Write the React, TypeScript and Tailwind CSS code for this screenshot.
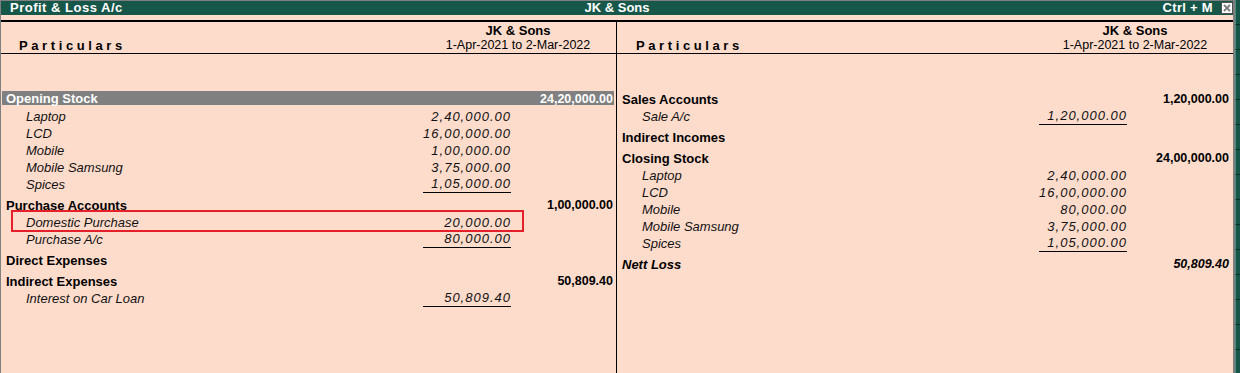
import React from "react";

type Item = { label: string; sub: string; underline?: boolean; boxed?: boolean };
type Group = { head: string; amount?: string; highlight?: boolean; nett?: boolean; items: Item[] };

const leftGroups: Group[] = [
  {
    head: "Opening Stock",
    amount: "24,20,000.00",
    highlight: true,
    items: [
      { label: "Laptop", sub: "2,40,000.00" },
      { label: "LCD", sub: "16,00,000.00" },
      { label: "Mobile", sub: "1,00,000.00" },
      { label: "Mobile Samsung", sub: "3,75,000.00" },
      { label: "Spices", sub: "1,05,000.00", underline: true },
    ],
  },
  {
    head: "Purchase Accounts",
    amount: "1,00,000.00",
    items: [
      { label: "Domestic Purchase", sub: "20,000.00", boxed: true },
      { label: "Purchase A/c", sub: "80,000.00", underline: true },
    ],
  },
  { head: "Direct Expenses", items: [] },
  {
    head: "Indirect Expenses",
    amount: "50,809.40",
    items: [{ label: "Interest on Car Loan", sub: "50,809.40", underline: true }],
  },
];

const rightGroups: Group[] = [
  {
    head: "Sales Accounts",
    amount: "1,20,000.00",
    items: [{ label: "Sale A/c", sub: "1,20,000.00", underline: true }],
  },
  { head: "Indirect Incomes", items: [] },
  {
    head: "Closing Stock",
    amount: "24,00,000.00",
    items: [
      { label: "Laptop", sub: "2,40,000.00" },
      { label: "LCD", sub: "16,00,000.00" },
      { label: "Mobile", sub: "80,000.00" },
      { label: "Mobile Samsung", sub: "3,75,000.00" },
      { label: "Spices", sub: "1,05,000.00", underline: true },
    ],
  },
  { head: "Nett Loss", amount: "50,809.40", nett: true, items: [] },
];

function HeadRow({ g, right }: { g: Group; right: boolean }) {
  if (g.highlight) {
    return (
      <div className="ml-[1px] mr-[2px] mb-[3px] flex h-[14px] items-start bg-[#808080] pl-[4px] pr-[1px] text-white">
        <div className="flex-1 text-[13px] font-bold leading-[16px]">{g.head}</div>
        <div className="w-[100px] text-right text-[12.5px] font-bold leading-[16px]">{g.amount}</div>
      </div>
    );
  }
  return (
    <div className={`flex h-[17px] items-center pl-[5px] text-black ${right ? "pr-[4px]" : "pr-[3px]"} ${g.nett ? "italic" : ""}`}>
      <div className="flex-1 text-[13px] font-bold leading-[17px]">{g.head}</div>
      <div className="w-[100px] text-right text-[12.5px] font-bold leading-[17px]">{g.amount ?? ""}</div>
    </div>
  );
}

function SubRow({ it, right }: { it: Item; right: boolean }) {
  return (
    <div className={`flex h-[17px] items-center pl-[5px] text-[#111] ${right ? "pr-[4px]" : "pr-[3px]"}`}>
      <div className="ml-[20px] flex-1 text-[13px] italic leading-[17px]">{it.label}</div>
      <div className="flex w-[100px] justify-end">
        <div
          className={`h-[17px] w-[88px] text-right text-[13px] italic tracking-[1px] ${
            it.underline ? "border-b border-black leading-[16px]" : "leading-[17px]"
          }`}
        >
          {it.sub}
        </div>
      </div>
      <div className="w-[2px]" />
      <div className="w-[100px]" />
    </div>
  );
}

function Panel({ groups, right }: { groups: Group[]; right: boolean }) {
  return (
    <div className={`relative flex flex-col ${right ? "w-[616px]" : "w-[615px]"}`}>
      <div className="flex h-[32px] border-b border-black">
        <div className={`flex-1 pt-[16px] text-[13px] font-bold leading-[15px] tracking-[3.6px] text-black ${right ? "pl-[19px]" : "pl-[18px]"}`}>
          Particulars
        </div>
        <div className={`flex w-[190px] flex-col items-center pt-[1px] text-black ${right ? "mr-[3px]" : "mr-[3px]"}`}>
          <div className="text-[13px] font-bold leading-[15px]">JK &amp; Sons</div>
          <div className="text-[12.5px] leading-[15px]">1-Apr-2021 to 2-Mar-2022</div>
        </div>
      </div>
      <div className="flex flex-col pt-[37px]">
        {groups.map((g, i) => (
          <div key={g.head} className={i === 0 ? "" : "mt-[4px]"}>
            <HeadRow g={g} right={right} />
            {g.items.map((it) => (
              <SubRow key={it.label} it={it} right={right} />
            ))}
          </div>
        ))}
      </div>
      {!right && (
        <div className="pointer-events-none absolute left-[10px] top-[188px] h-[22px] w-[513px] border-2 border-[#e5202a]" />
      )}
    </div>
  );
}

export default function App() {
  const segs = Array.from({ length: 16 });
  return (
    <div className="flex h-[373px] w-[1240px] overflow-hidden bg-[#fedccc] font-['Liberation_Sans',Arial,sans-serif]">
      <div className="flex w-[1233px] flex-col border-l border-[#808080]">
        <div className="grid h-[15px] grid-cols-[1fr_auto_1fr] items-center border-t border-[#808080] bg-[#17574a] text-[13px] font-bold leading-[14px] text-white">
          <div className="pl-[9px] tracking-[0.5px]">Profit &amp; Loss A/c</div>
          <div>JK &amp; Sons</div>
          <div className="flex items-center justify-end">
            <span className="tracking-[0.3px]">Ctrl + M</span>
            <div className="ml-[8px] flex h-[12px] w-[12px] items-center justify-center border border-[#505050] bg-white">
              <svg width="8" height="8" viewBox="0 0 8 8">
                <path d="M1 1 L7 7 M7 1 L1 7" stroke="#7a7a7a" strokeWidth="1.8" />
              </svg>
            </div>
          </div>
        </div>
        <div className="h-[5px]" />
        <div className="h-[2px] bg-black" />
        <div className="flex flex-1">
          <Panel groups={leftGroups} right={false} />
          <div className="w-px bg-black" />
          <Panel groups={rightGroups} right={true} />
        </div>
      </div>
      <div className="w-[2px] bg-[#7d7d7d]" />
      <div className="flex w-[5px] flex-col bg-[#17574a]">
        {segs.map((_, i) => (
          <div key={i} className="h-[25px] shrink-0 border-b border-l border-b-[#0b3028] border-l-[#4c8a7c]" />
        ))}
      </div>
    </div>
  );
}
